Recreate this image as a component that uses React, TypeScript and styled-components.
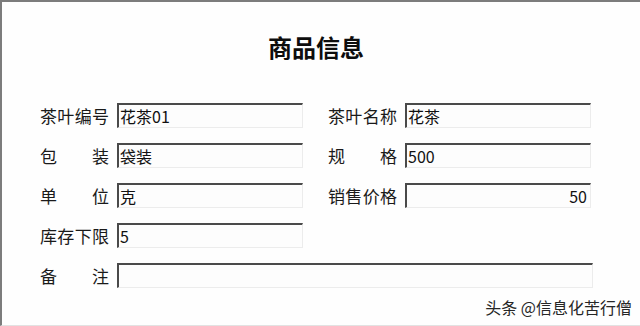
import React from 'react';
import styled, {createGlobalStyle} from 'styled-components';

const Global = createGlobalStyle`
  html, body {
    margin: 0;
    padding: 0;
    background: #ffffff;
  }
  body {
    font-family: "Noto Sans CJK SC", "Noto Sans", sans-serif;
  }
`;

const Frame = styled.div`
  position: relative;
  box-sizing: border-box;
  width: 640px;
  height: 326px;
  border-top: 2px solid #7c7c7c;
  border-left: 2px solid #7c7c7c;
  border-bottom: 1px solid #e2e2e2;
  background: #fefefe;
  display: flex;
  flex-direction: column;
  padding: 29px 0 0 38px;
`;

const Title = styled.h1`
  margin: 0 0 40px;
  width: 552px;
  height: 32px;
  line-height: 32px;
  text-align: center;
  font-size: 24px;
  font-weight: 700;
  color: #0d0d0d;
`;

const Rows = styled.div`
  display: flex;
  flex-direction: column;
  gap: 15px;
`;

const Row = styled.div`
  display: flex;
  gap: 25px;
`;

const Field = styled.div<{$wide?: boolean}>`
  display: flex;
  align-items: center;
  gap: 8px;
  width: ${p => (p.$wide ? '553px' : '263px')};
`;

const Label = styled.span`
  width: 69px;
  flex: none;
  display: flex;
  justify-content: space-between;
  font-size: 17px;
  line-height: 25px;
  color: #1a1a1a;
`;

const Box = styled.div<{$right?: boolean}>`
  box-sizing: border-box;
  flex: 1;
  height: 25px;
  border-top: 2px solid #4a4a4a;
  border-left: 2px solid #4a4a4a;
  border-right: 1px solid #ececec;
  border-bottom: 1px solid #ececec;
  background: #fdfdfd;
  padding: 0 ${p => (p.$right ? '3px' : '1px')};
  font-size: 16px;
  line-height: 22px;
  color: #111;
  text-align: ${p => (p.$right ? 'right' : 'left')};
  white-space: nowrap;
  overflow: hidden;
`;

const Watermark = styled.div`
  position: absolute;
  right: 8px;
  bottom: 8px;
  font-size: 16px;
  line-height: 20px;
  color: #262626;
  text-shadow: 0 0 2px #fff, 0 0 2px #fff;
`;

function FieldLabel({text}: {text: string}) {
  return (
    <Label>
      {text.split('').map((c, i) => <span key={i}>{c}</span>)}
    </Label>
  );
}

function Item({label, value, right, wide}: {label: string; value: string; right?: boolean; wide?: boolean}) {
  return (
    <Field $wide={wide}>
      <FieldLabel text={label}/>
      <Box $right={right}>{value}</Box>
    </Field>
  );
}

export default function App() {
  return (
    <>
      <Global/>
      <Frame>
        <Title>商品信息</Title>
        <Rows>
          <Row>
            <Item label="茶叶编号" value="花茶01"/>
            <Item label="茶叶名称" value="花茶"/>
          </Row>
          <Row>
            <Item label="包装" value="袋装"/>
            <Item label="规格" value="500"/>
          </Row>
          <Row>
            <Item label="单位" value="克"/>
            <Item label="销售价格" value="50" right/>
          </Row>
          <Row>
            <Item label="库存下限" value="5"/>
          </Row>
          <Row>
            <Item label="备注" value="" wide/>
          </Row>
        </Rows>
        <Watermark>头条 @信息化苦行僧</Watermark>
      </Frame>
    </>
  );
}
